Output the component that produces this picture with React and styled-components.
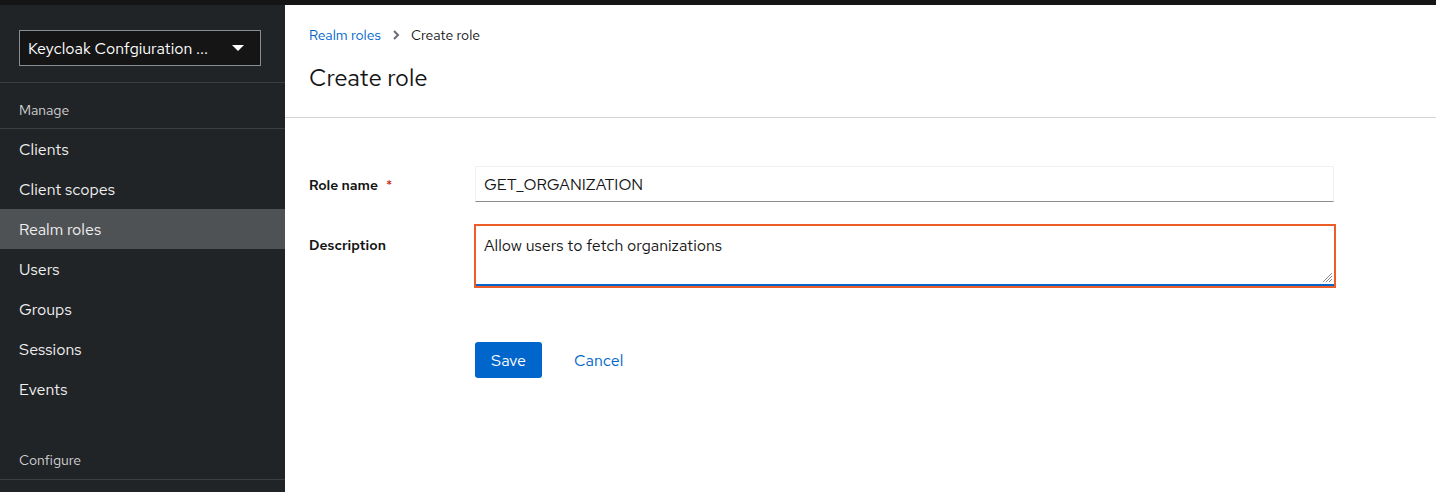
import React from 'react'
import styled, { createGlobalStyle } from 'styled-components'

const Global = createGlobalStyle`
  html, body { margin: 0; padding: 0; height: 100%; }
  body { font-family: "Red Hat Text", "Open Sans", "Liberation Sans", sans-serif; background: #fff; }
  #root { height: 100%; }
`

const Page = styled.div`
  display: flex;
  flex-direction: column;
  height: 492px;
  overflow: hidden;
`
const TopBar = styled.div`
  height: 5px;
  background: #151515;
  flex-shrink: 0;
`
const Body = styled.div`
  display: flex;
  flex: 1;
  min-height: 0;
`
const Sidebar = styled.nav`
  width: 285px;
  flex-shrink: 0;
  background: #212427;
  display: flex;
  flex-direction: column;
`
const SelectWrap = styled.div`
  padding: 25px 24px 16px 19px;
  border-bottom: 1px solid #3c3f42;
`
const Select = styled.div`
  height: 36px;
  box-sizing: border-box;
  border: 1px solid #8a8d90;
  background: #151515;
  color: #fff;
  font-size: 16px;
  display: flex;
  align-items: center;
  justify-content: space-between;
  padding: 0 16px 0 8px;
`
const Caret = styled.span`
  width: 0;
  height: 0;
  border-left: 6px solid transparent;
  border-right: 6px solid transparent;
  border-top: 6px solid #fff;
`
const GroupTitle = styled.div`
  color: #d2d2d2;
  font-size: 14px;
  padding: ${p => p.$top || 18}px 19px ${p => p.$bottom || 9}px;
  border-bottom: 1px solid #3c3f42;
`
const NavItem = styled.div`
  height: 40px;
  display: flex;
  align-items: center;
  padding: 0 19px;
  color: #f0f0f0;
  font-size: 16px;
  background: ${p => (p.$active ? '#4f5255' : 'transparent')};
`
const Main = styled.main`
  flex: 1;
  background: #fff;
  display: flex;
  flex-direction: column;
`
const Header = styled.div`
  padding: 21px 24px 24px;
  border-bottom: 1px solid #d2d2d2;
`
const Crumbs = styled.div`
  display: flex;
  align-items: center;
  gap: 11px;
  font-size: 14px;
  color: #151515;
`
const CrumbLink = styled.span`
  color: #0066cc;
`
const Title = styled.h1`
  margin: 18px 0 0;
  font-size: 24px;
  font-weight: 400;
  color: #151515;
`
const Form = styled.div`
  padding: 48px 0 0 24px;
  display: grid;
  grid-template-columns: 166px 860px;
  row-gap: 22px;
`
const Label = styled.div`
  font-size: 14px;
  font-weight: 600;
  color: #151515;
  padding-top: ${p => p.$pt || 10}px;
`
const Req = styled.span`
  color: #c9190b;
  margin-left: 8px;
  font-weight: 400;
`
const Input = styled.div`
  height: 36px;
  box-sizing: border-box;
  border: 1px solid #f0f0f0;
  border-bottom-color: #8a8d90;
  padding: 0 8px;
  display: flex;
  align-items: center;
  font-size: 16px;
  color: #151515;
  width: 859px;
`
const TextArea = styled.div`
  position: relative;
  height: 64px;
  box-sizing: border-box;
  border: 2px solid #ee5c27;
  margin-left: -1px;
  width: 862px;
  padding: 9px 8px 5px;
  font-size: 16px;
  color: #151515;
  box-shadow: inset 0 -2px 0 #0066cc;
`
const Grip = styled.svg`
  position: absolute;
  right: 1px;
  bottom: 3px;
`
const Actions = styled.div`
  grid-column: 2;
  display: flex;
  align-items: center;
  gap: 16px;
  margin-top: 32px;
`
const Button = styled.button`
  font-family: inherit;
  font-size: 16px;
  height: 36px;
  padding: 0 16px;
  border: none;
  border-radius: 3px;
  background: ${p => (p.$link ? 'transparent' : '#0066cc')};
  color: ${p => (p.$link ? '#0066cc' : '#fff')};
`

const nav = ['Clients', 'Client scopes', 'Realm roles', 'Users', 'Groups', 'Sessions', 'Events']

export default function App() {
  return (
    <Page>
      <Global />
      <TopBar />
      <Body>
        <Sidebar>
          <SelectWrap>
            <Select>
              <span>Keycloak Confgiuration ...</span>
              <Caret />
            </Select>
          </SelectWrap>
          <GroupTitle>Manage</GroupTitle>
          {nav.map(n => (
            <NavItem key={n} $active={n === 'Realm roles'}>{n}</NavItem>
          ))}
          <GroupTitle $top={42} $bottom={10}>Configure</GroupTitle>
        </Sidebar>
        <Main>
          <Header>
            <Crumbs>
              <CrumbLink>Realm roles</CrumbLink>
              <svg width="8" height="10" viewBox="0 0 8 10">
                <path d="M2 1l4 4-4 4" fill="none" stroke="#6a6e73" strokeWidth="2" />
              </svg>
              <span>Create role</span>
            </Crumbs>
            <Title>Create role</Title>
          </Header>
          <Form>
            <Label>Role name<Req>*</Req></Label>
            <Input>GET_ORGANIZATION</Input>
            <Label $pt={12}>Description</Label>
            <TextArea>
              Allow users to fetch organizations
              <Grip width="11" height="11" viewBox="0 0 11 11">
                <path d="M10 1L1 10M10 4L4 10M10 7L7 10" stroke="#8a8d90" strokeWidth="1" />
              </Grip>
            </TextArea>
            <Actions>
              <Button>Save</Button>
              <Button $link>Cancel</Button>
            </Actions>
          </Form>
        </Main>
      </Body>
    </Page>
  )
}
